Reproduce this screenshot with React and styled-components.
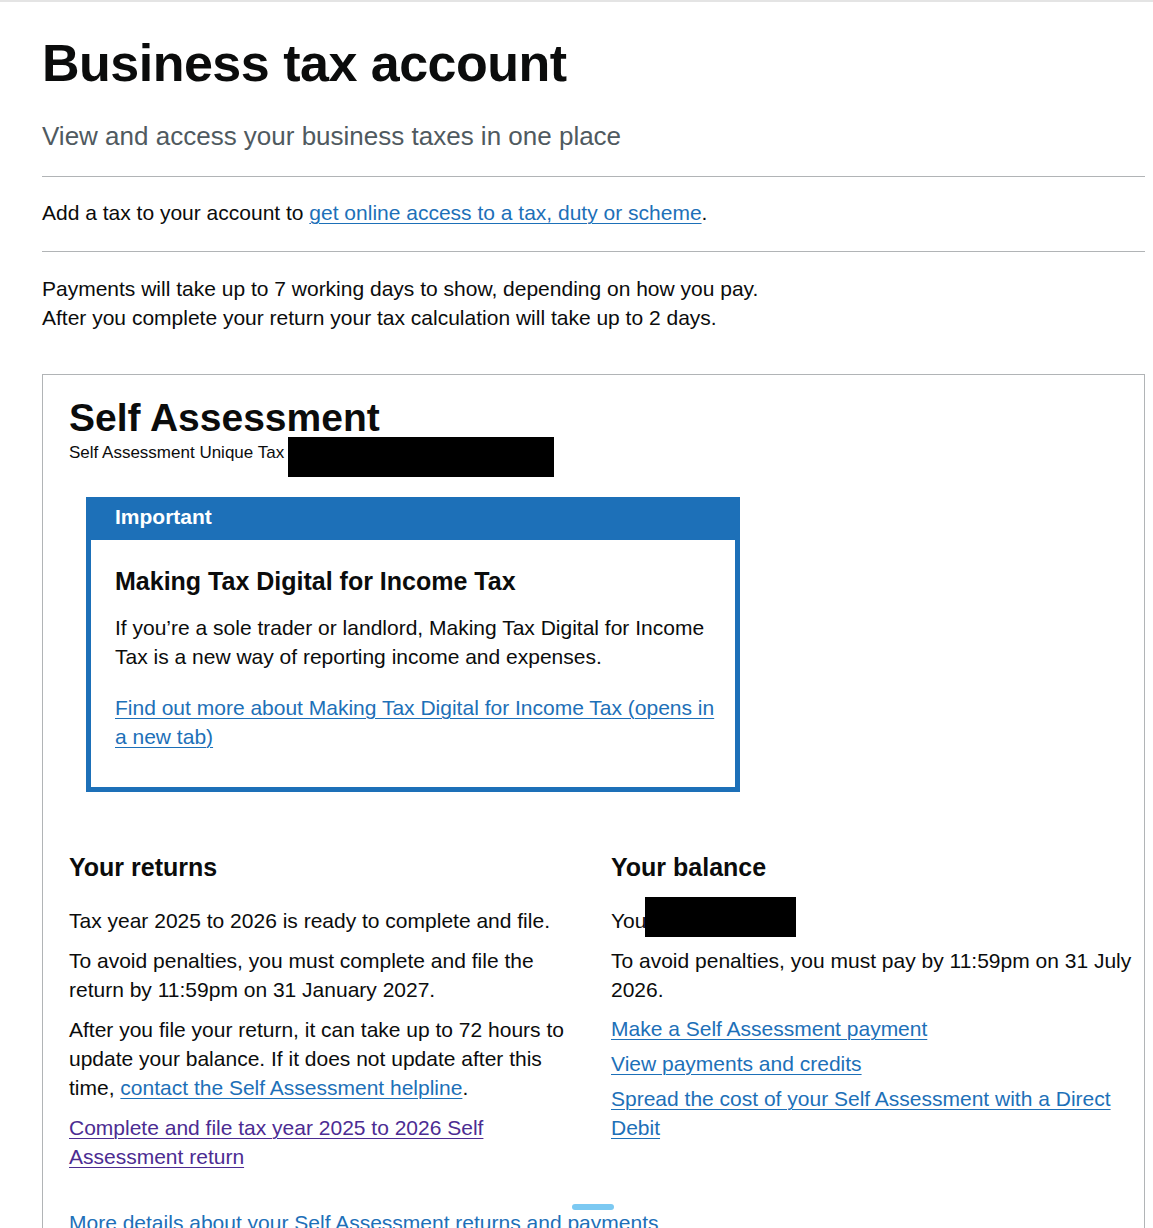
import React from "react";
import styled, { createGlobalStyle } from "styled-components";

const GlobalStyle = createGlobalStyle`
  html, body {
    margin: 0;
    padding: 0;
    background: #ffffff;
  }
  body {
    font-family: "Liberation Sans", Arial, sans-serif;
    color: #0b0c0c;
    -webkit-font-smoothing: antialiased;
  }
`;

const TopRule = styled.div`
  height: 2px;
  background: #e4e4e4;
`;

const Main = styled.main`
  padding: 0 8px 0 42px;
  overflow: hidden;
`;

const PageTitle = styled.h1`
  margin: 32px 0 0;
  font-size: 52px;
  line-height: 58px;
  font-weight: 700;
  letter-spacing: -0.5px;
`;

const Lede = styled.p`
  margin: 28px 0 0;
  font-size: 26px;
  line-height: 32px;
  color: #505a5f;
`;

const Rule = styled.hr`
  margin: ${(p) => p.$top}px 0 0;
  border: 0;
  border-top: 1px solid #b1b4b6;
`;

const Body = styled.p`
  margin: ${(p) => p.$top || 0}px 0 0;
  font-size: 21px;
  line-height: 29px;
  position: relative;
`;

const Link = styled.a`
  color: ${(p) => (p.$visited ? "#4c2c92" : "#1d70b8")};
  text-decoration: underline;
  text-decoration-thickness: 1px;
  text-underline-offset: 0.16em;
  cursor: pointer;
`;

const Card = styled.section`
  margin-top: 42px;
  border: 1px solid #b1b4b6;
  border-bottom: 0;
  padding: 21px 12px 60px 26px;
  position: relative;
`;

const CardTitle = styled.h2`
  margin: 0;
  font-size: 39px;
  line-height: 44px;
  font-weight: 700;
`;

const Caption = styled.p`
  margin: 3px 0 0;
  font-size: 17px;
  line-height: 20px;
  position: relative;
`;

const Redacted = styled.span`
  position: absolute;
  left: ${(p) => p.$left}px;
  top: ${(p) => p.$top}px;
  width: ${(p) => p.$w}px;
  height: ${(p) => p.$h}px;
  background: #000000;
`;

const Banner = styled.div`
  margin: 34px 0 0 17px;
  width: 654px;
  border: 5px solid #1d70b8;
  background: #1d70b8;
  box-sizing: border-box;
`;

const BannerHeader = styled.div`
  padding: 2px 24px 10px;
  font-size: 21px;
  line-height: 26px;
  font-weight: 700;
  color: #ffffff;
`;

const BannerContent = styled.div`
  background: #ffffff;
  padding: 26px 16px 36px 24px;
`;

const SubHeading = styled.h3`
  margin: 0;
  font-size: 25px;
  line-height: 30px;
  font-weight: 700;
`;

const Columns = styled.div`
  margin-top: 60px;
  display: grid;
  grid-template-columns: 507px 1fr;
  column-gap: 35px;
`;

const Column = styled.div`
  display: flex;
  flex-direction: column;
`;

const LinkList = styled.ul`
  list-style: none;
  margin: 10px 0 0;
  padding: 0;
  display: flex;
  flex-direction: column;
  gap: 6px;
  font-size: 21px;
  line-height: 29px;
`;

const ScrollPill = styled.span`
  position: absolute;
  left: 503px;
  top: -4px;
  width: 42px;
  height: 6px;
  border-radius: 3px;
  background: #7cc9f2;
`;

export default function App() {
  return (
    <>
      <GlobalStyle />
      <TopRule />
      <Main>
        <PageTitle>Business tax account</PageTitle>
        <Lede>View and access your business taxes in one place</Lede>
        <Rule $top={24} />
        <Body $top={21}>
          Add a tax to your account to{" "}
          <Link>get online access to a tax, duty or scheme</Link>.
        </Body>
        <Rule $top={24} />
        <Body $top={22}>
          Payments will take up to 7 working days to show, depending on how you pay.
          <br />
          After you complete your return your tax calculation will take up to 2 days.
        </Body>

        <Card>
          <CardTitle>Self Assessment</CardTitle>
          <Caption>
            Self Assessment Unique Tax
            <Redacted $left={219} $top={-6} $w={266} $h={40} />
          </Caption>

          <Banner>
            <BannerHeader>Important</BannerHeader>
            <BannerContent>
              <SubHeading>Making Tax Digital for Income Tax</SubHeading>
              <Body $top={17}>
                If you’re a sole trader or landlord, Making Tax Digital for Income
                Tax is a new way of reporting income and expenses.
              </Body>
              <Body $top={22}>
                <Link>
                  Find out more about Making Tax Digital for Income Tax (opens in
                  a new tab)
                </Link>
              </Body>
            </BannerContent>
          </Banner>

          <Columns>
            <Column>
              <SubHeading>Your returns</SubHeading>
              <Body $top={24}>Tax year 2025 to 2026 is ready to complete and file.</Body>
              <Body $top={11}>
                To avoid penalties, you must complete and file the return by
                11:59pm on 31 January 2027.
              </Body>
              <Body $top={11}>
                After you file your return, it can take up to 72 hours to update
                your balance. If it does not update after this time,{" "}
                <Link>contact the Self Assessment helpline</Link>.
              </Body>
              <Body $top={11}>
                <Link $visited>
                  Complete and file tax year 2025 to 2026 Self Assessment return
                </Link>
              </Body>
            </Column>
            <Column>
              <SubHeading>Your balance</SubHeading>
              <Body $top={24}>
                You
                <Redacted $left={34} $top={-9} $w={151} $h={40} />
              </Body>
              <Body $top={11}>
                To avoid penalties, you must pay by 11:59pm on 31 July 2026.
              </Body>
              <LinkList>
                <li>
                  <Link>Make a Self Assessment payment</Link>
                </li>
                <li>
                  <Link>View payments and credits</Link>
                </li>
                <li>
                  <Link>
                    Spread the cost of your Self Assessment with a Direct Debit
                  </Link>
                </li>
              </LinkList>
            </Column>
          </Columns>

          <Body $top={37}>
            <Link>More details about your Self Assessment returns and payments</Link>
            <ScrollPill />
          </Body>
        </Card>
      </Main>
    </>
  );
}
